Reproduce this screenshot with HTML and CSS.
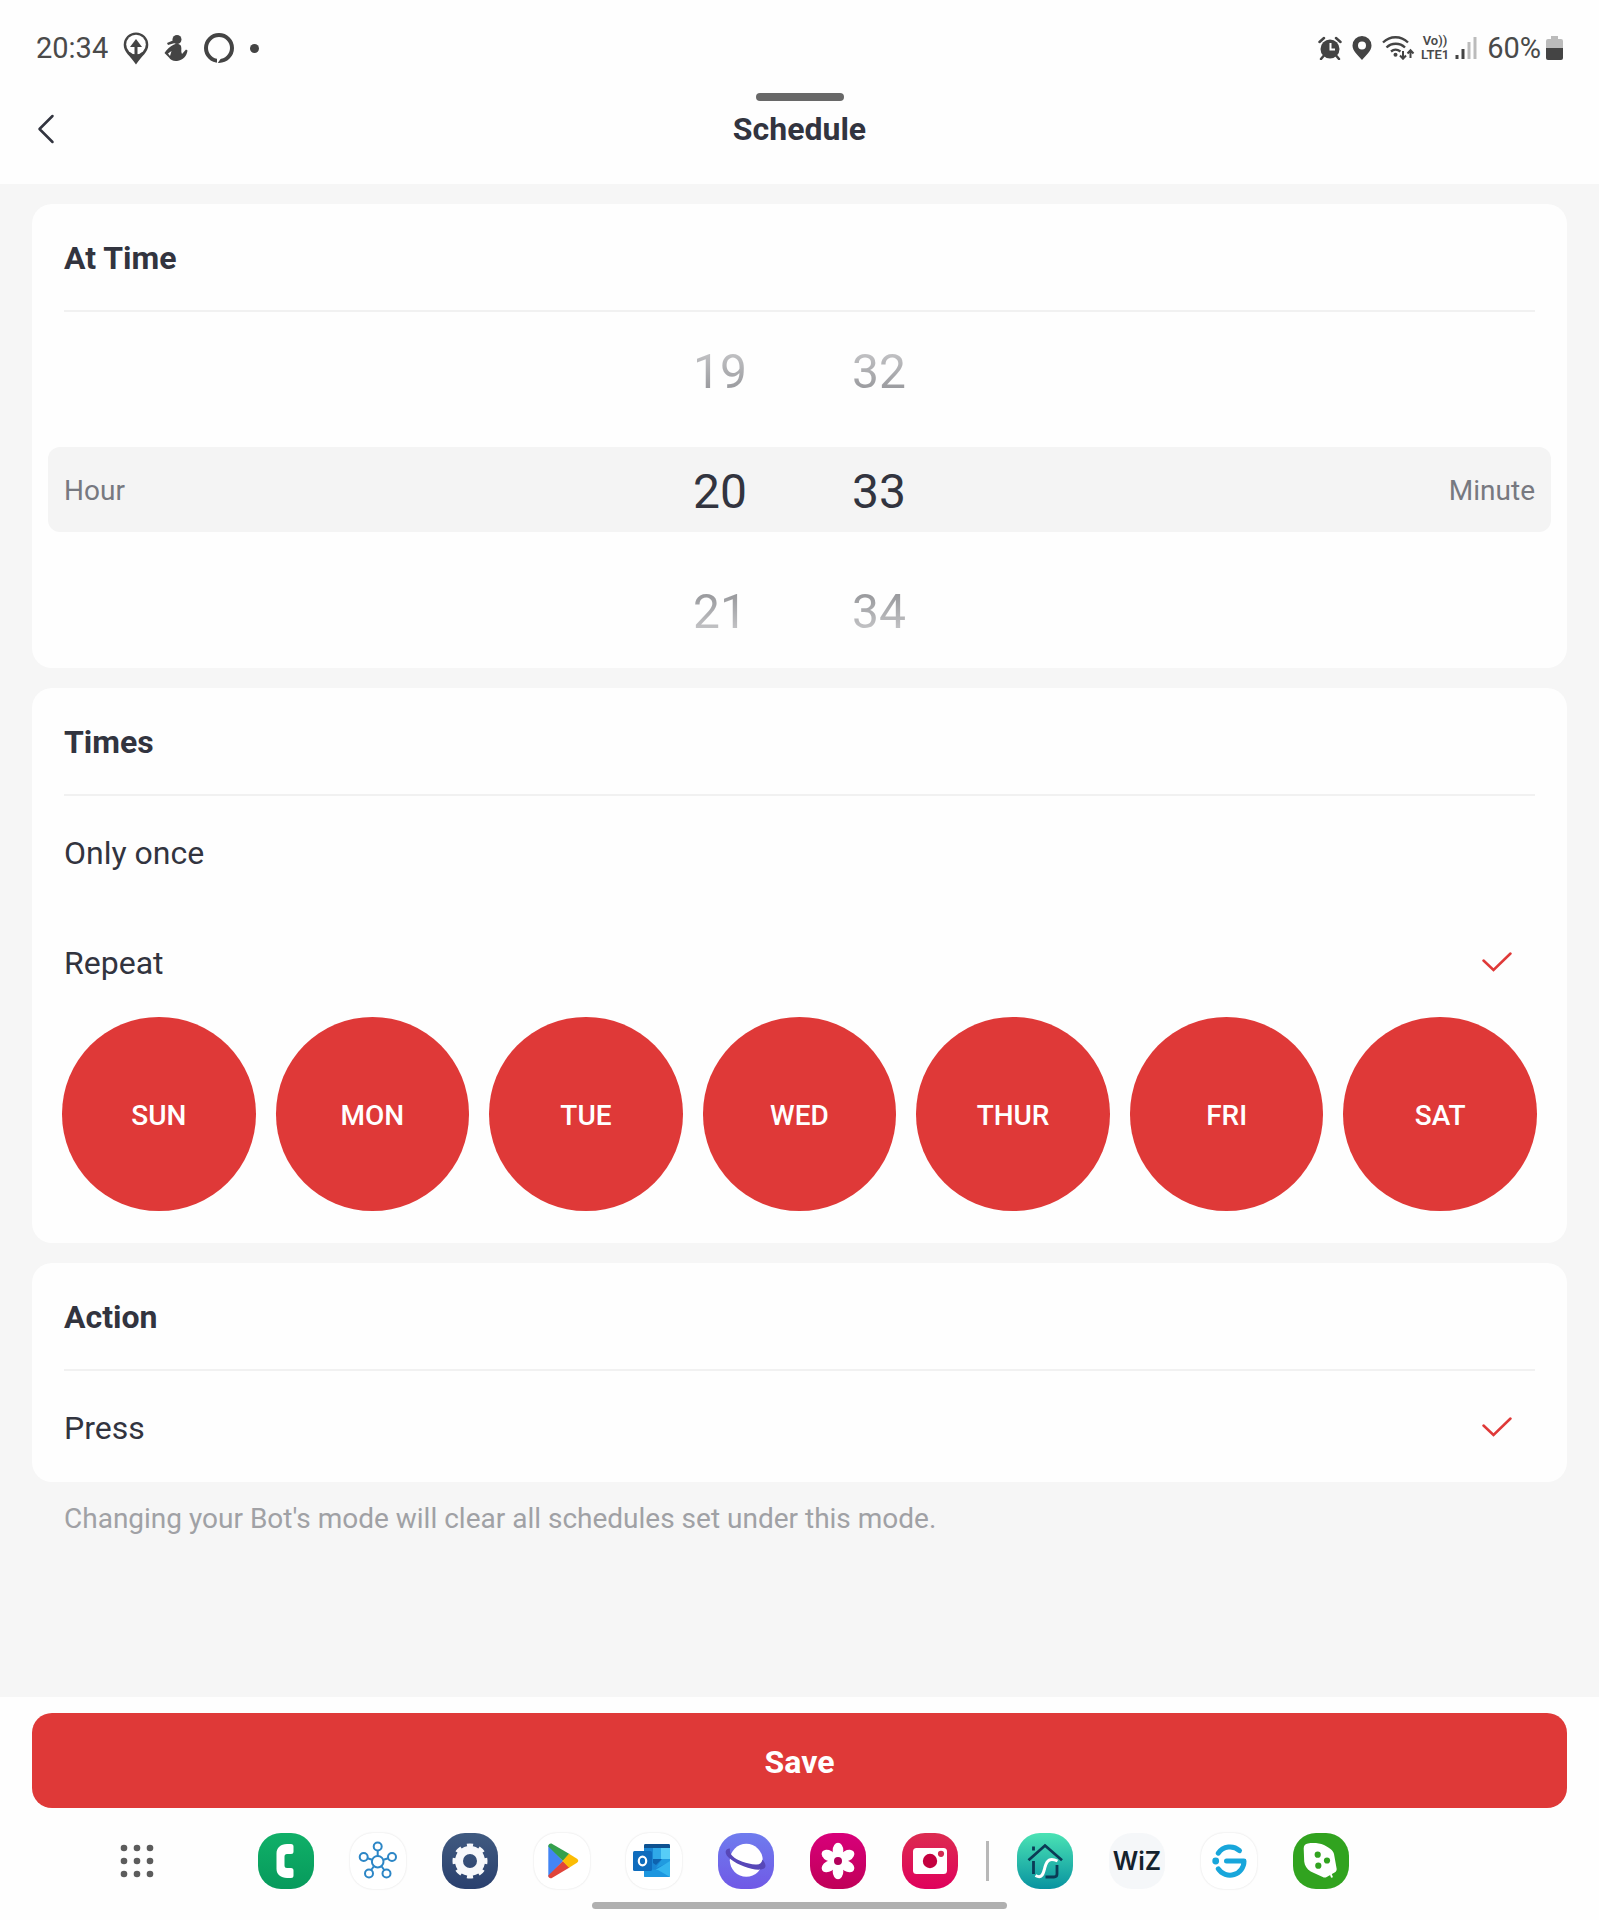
FILE: index.html
```html
<!DOCTYPE html>
<html lang="en">
<head>
	<meta charset="utf-8" />
	<title>Schedule</title>
	<meta name="viewport" content="width=device-width,initial-scale=1.0">
	<link rel="stylesheet" href="styles.css">
</head>

<body>
<div class="statusbar">
  <div class="status-left">
    <span>20:34</span>
    <svg width="26" height="33" viewBox="0 0 26 33">
      <path d="M13 .500a12.300 12.300 0 0 0-12.300 12.300c0 7.500 6.500 11 12.300 19.700 5.800-8.700 12.300-12.200 12.300-19.700A12.300 12.300 0 0 0 13 .500z" fill="#444"/>
      <circle cx="13" cy="12.500" r="9.800" fill="#fff"/>
      <path d="M13 7l6 8h-4.500v9h-3v-9H7z" fill="#444"/>
    </svg>
    <svg width="24" height="28" viewBox="0 0 24 28" fill="#444">
      <circle cx="13" cy="5.500" r="4.500"/>
      <path d="M10 6L3 9l1 2 7-2z"/>
      <path d="M10 10.500c3-1 6-.5 7 1.500 1 3-.5 5.500 1 8l4-4.500 1.500 1c-.5 5-4.500 10-10.500 10.500-4 .3-6.500-1-8-3.500L.500 19c2-3.500 6-7 9.500-8.500zM7.500 17L4 19.500 6 22z" fill-rule="evenodd"/>
    </svg>
    <svg width="32" height="32" viewBox="0 0 32 32">
      <circle cx="16" cy="16" r="13" fill="none" stroke="#444" stroke-width="4"/>
      <path d="M14 26v6l5-7z" fill="#fff"/>
    </svg>
    <span class="dot"></span>
  </div>
  <div class="status-right">
    <svg width="24" height="24" viewBox="0 0 24 24">
      <circle cx="12" cy="13" r="9.500" fill="#444"/>
      <path d="M1.500 6L6 2M22.500 6L18 2M5.500 20L3 23M18.500 20l2.500 3" stroke="#444" stroke-width="2.500" fill="none" stroke-linecap="round"/>
      <path d="M12.500 7v6.500H17" stroke="#fff" stroke-width="2" fill="none"/>
    </svg>
    <svg width="20" height="24" viewBox="0 0 20 24">
      <path d="M10 0a9.500 9.500 0 0 0-9.500 9.500C.500 15 6 19 10 24c4-5 9.500-9 9.500-14.500A9.500 9.500 0 0 0 10 0zm0 5.500a4 4 0 1 1 0 8 4 4 0 0 1 0-8z" fill="#444" fill-rule="evenodd"/>
    </svg>
    <svg width="33" height="24" viewBox="0 0 33 24" fill="none" stroke="#444" stroke-width="2.300">
      <path d="M1 6.500C8-.5 19-.5 26 6.500M4.500 11.500c5-5 13.500-5 18.500 0M9 15.500c3-2.500 6-2.500 9.500 0"/>
      <circle cx="13.500" cy="18.800" r="2" fill="#444" stroke="none"/>
      <path d="M21 15v7.500M18 19.500l3 3.200 3-3.200M28.500 22v-7.500M25.500 17.500l3-3.200 3 3.200" stroke-width="2"/>
    </svg>
    <span class="volte"><span>Vo))</span><span>LTE1</span></span>
    <svg width="22" height="24" viewBox="0 0 22 24">
      <path d="M2 19v4M8 13v10" stroke="#444" stroke-width="3"/>
      <path d="M14 6v17M20 1v22" stroke="#bbb" stroke-width="3"/>
    </svg>
    <span class="battery">60%
      <svg width="17" height="26" viewBox="0 0 17 26">
        <path d="M5 1h7v3h3q2 0 2 2v7H0V6q0-2 2-2h3z" fill="#bbb"/>
        <path d="M0 13h17v10q0 2-2 2H2q-2 0-2-2z" fill="#444"/>
      </svg>
    </span>
  </div>
</div>

<header class="header">
  <div class="handle"></div>
  <div class="titlebar">
    <a href="#" class="back" aria-label="Back">
      <svg width="18" height="30" viewBox="0 0 18 30"><path d="M15.500 2L2.500 15l13 13" fill="none" stroke="#32343f" stroke-width="2.500" stroke-linecap="round" stroke-linejoin="round"/></svg>
    </a>
    <h1>Schedule</h1>
  </div>
</header>

<main>
  <section class="card">
    <h2>At Time</h2>
    <div class="picker">
      <div class="picker-row fade-up">
        <button type="button" class="hour">19</button>
        <button type="button" class="minute">32</button>
      </div>
      <div class="picker-row current">
        <span class="unit">Hour</span>
        <output class="hour">20</output>
        <output class="minute">33</output>
        <span class="unit unit-right">Minute</span>
      </div>
      <div class="picker-row fade-down">
        <button type="button" class="hour">21</button>
        <button type="button" class="minute">34</button>
      </div>
    </div>
  </section>

  <section class="card">
    <h2>Times</h2>
    <label class="option">
      <input type="radio" name="times" value="once">
      <span>Only once</span>
      <svg class="check" width="30" height="20" viewBox="0 0 30 20"><path d="M1.500 8.500L11.500 18 28.500 1.500" stroke-width="2.500"/></svg>
    </label>
    <label class="option">
      <input type="radio" name="times" value="repeat" checked>
      <span>Repeat</span>
      <svg class="check" width="30" height="20" viewBox="0 0 30 20"><path d="M1.500 8.500L11.500 18 28.500 1.500" stroke-width="2.500"/></svg>
    </label>
    <div class="days">
      <label><input type="checkbox" checked><span>SUN</span></label>
      <label><input type="checkbox" checked><span>MON</span></label>
      <label><input type="checkbox" checked><span>TUE</span></label>
      <label><input type="checkbox" checked><span>WED</span></label>
      <label><input type="checkbox" checked><span>THUR</span></label>
      <label><input type="checkbox" checked><span>FRI</span></label>
      <label><input type="checkbox" checked><span>SAT</span></label>
    </div>
  </section>

  <section class="card">
    <h2>Action</h2>
    <label class="option">
      <input type="radio" name="action" value="press" checked>
      <span>Press</span>
      <svg class="check" width="30" height="20" viewBox="0 0 30 20"><path d="M1.500 8.500L11.500 18 28.500 1.500" stroke-width="2.500"/></svg>
    </label>
  </section>
  <p class="hint">Changing your Bot's mode will clear all schedules set under this mode.</p>
</main>

<footer>
  <button type="button" class="save">Save</button>

  <nav class="dock">
    <a href="#" class="apps" aria-label="Apps">
      <svg width="34" height="34" viewBox="0 0 34 34" fill="#5c5c5c">
        <circle cx="4" cy="4" r="3.300"/><circle cx="17" cy="4" r="3.300"/><circle cx="30" cy="4" r="3.300"/>
        <circle cx="4" cy="17" r="3.300"/><circle cx="17" cy="17" r="3.300"/><circle cx="30" cy="17" r="3.300"/>
        <circle cx="4" cy="30" r="3.300"/><circle cx="17" cy="30" r="3.300"/><circle cx="30" cy="30" r="3.300"/>
      </svg>
    </a>
    <a href="#" class="app phone" aria-label="Phone">
      <svg viewBox="0 0 56 56"><path d="M33 11h-4c-6.500 0-10.500 4-10.500 9.500V36c0 5.500 4.500 9 10.500 9h4q2.500 0 2.500-2.500v-5q0-2.500-2.500-2.500h-4q-2.500 0-2.500-2.500v-9q0-2.500 2.500-2.500h4q2.500 0 2.500-2.500v-5Q35.500 11 33 11z" fill="#fff"/></svg>
    </a>
    <a href="#" class="app light" aria-label="SmartThings">
      <svg viewBox="0 0 56 56" fill="none" stroke="#2c86c6" stroke-width="2">
        <circle cx="27.700" cy="28.700" r="5.800"/><circle cx="27.700" cy="13.500" r="4"/><circle cx="13.700" cy="24" r="4"/><circle cx="42" cy="24" r="4"/><circle cx="19" cy="40.500" r="4"/><circle cx="36.500" cy="40.500" r="4"/>
        <path d="M27.700 17.500v5.400M17.500 25.200l4.700 1.600M38.200 25.200l-4.700 1.600M21.200 37l2.500-3.500M34.200 37l-2.500-3.500"/>
      </svg>
    </a>
    <a href="#" class="app settings" aria-label="Settings">
      <svg viewBox="0 0 56 56" fill="none" stroke="#f7f8fb">
        <circle cx="28" cy="28" r="11" stroke-width="8"/>
        <circle cx="28" cy="28" r="15.500" stroke-width="4" pathLength="16" stroke-dasharray="1 1" stroke-dashoffset=".5"/>
      </svg>
    </a>
    <a href="#" class="app light" aria-label="Play Store">
      <svg viewBox="0 0 56 56">
        <path d="M14.300 12v32L29 28z" fill="#4285f4"/>
        <path d="M14.300 13.500c0-2.500 2-3.500 4-2.500L35.500 21 29 28z" fill="#34a04c"/>
        <path d="M14.300 42.500c0 2.500 2 3.500 4 2.300L35.500 34.500 29 28z" fill="#e0443a"/>
        <path d="M35 20.700l8 5q2.500 2 0 4l-8 5L28.500 28z" fill="#fbbc04"/>
      </svg>
    </a>
    <a href="#" class="app light" aria-label="Outlook">
      <svg viewBox="0 0 56 56">
        <rect x="18" y="11" width="26" height="33" rx="1.500" fill="#1a86d4"/>
        <path d="M19.500 11h23q1.500 0 1.500 1.500V15H18v-2.500q0-1.500 1.500-1.500z" fill="#0d5190"/>
        <path d="M27 15h8v11h-8z" fill="#2fa9e8"/><path d="M35 15h9v11h-9z" fill="#57cdf7"/>
        <path d="M27 26h9l-6 6-3-2z" fill="#0e62ae"/><path d="M36 26h8v3l-14 6z" fill="#209be0"/>
        <path d="M18 44l26-16v14.500q0 1.500-1.500 1.500z" fill="#34b5ee"/>
        <path d="M18 36l14 1 12 7H19.500q-1.500 0-1.500-1.500z" fill="#1d96df"/>
        <rect x="7" y="18" width="19" height="20" rx="1.500" fill="#0f6cbd"/>
        <ellipse cx="16.500" cy="28" rx="3.700" ry="4.400" fill="none" stroke="#fff" stroke-width="2.200"/>
      </svg>
    </a>
    <a href="#" class="app internet" aria-label="Internet">
      <svg viewBox="0 0 56 56">
        <circle cx="28.300" cy="27.300" r="16.500" fill="#fff"/>
        <path d="M12 15.500C6 15.500 6 22 13 26.500c8 6 21 11 30 10 6-.8 5.500-5 1.500-10-1 4-3 5.500-7 5C29 31 19 27.500 14.500 23c-2-2-3-4.500-2.500-7.500z" fill="#5747b8"/>
      </svg>
    </a>
    <a href="#" class="app gallery" aria-label="Gallery">
      <svg viewBox="0 0 56 56" fill="#fff">
        <g id="petals"><ellipse cx="28" cy="17.500" rx="5.300" ry="7.800"/><ellipse cx="28" cy="38.500" rx="5.300" ry="7.800"/></g>
        <use href="#petals" transform="rotate(60 28 28)"/><use href="#petals" transform="rotate(120 28 28)"/>
        <circle cx="28" cy="28" r="6"/>
        <circle cx="28" cy="28" r="4" fill="#b3005c"/>
      </svg>
    </a>
    <a href="#" class="app camera" aria-label="Camera">
      <svg viewBox="0 0 56 56">
        <rect x="11" y="15" width="34" height="26" rx="3.500" fill="#fff"/>
        <circle cx="28" cy="28" r="7.200" fill="#c4003f"/><circle cx="39" cy="20.800" r="3.100" fill="#d32a50"/>
      </svg>
    </a>
    <span class="separator"></span>
    <a href="#" class="app home" aria-label="Smart home">
      <svg viewBox="0 0 56 56" fill="none" stroke="#0b3b55" stroke-width="2.800">
        <path d="M11.500 27.300L28 12.500l17 14.800M16.500 13.500v4M16.500 28v13M40 32v9q0 3-3 3h-8.500"/>
        <path d="M18.500 42.500c7 4 8-3 9.500-8.500 2-7 5-9.500 12.500-6" stroke="#fff" stroke-width="3"/>
      </svg>
    </a>
    <a href="#" class="app wiz">WiZ</a>
    <a href="#" class="app light" aria-label="Govee">
      <svg viewBox="0 0 56 56" fill="none" stroke="#18a6db" stroke-width="5">
        <path d="M17.300 20.200a14 14 0 0 1 21.200-2.500" stroke-linecap="round"/>
        <path d="M25.500 28H43a14 14 0 0 1-25.700 7.800" stroke-linecap="round" stroke-linejoin="round"/>
        <circle cx="14.700" cy="28" r="3.400" fill="#18a6db" stroke="none"/>
      </svg>
    </a>
    <a href="#" class="app plant" aria-label="Nature">
      <svg viewBox="0 0 56 56">
        <path d="M15 10.500c5-1 11-.5 16 1.500 5 2.500 9 5 10 9l2.700 15c0 2-1 3-3 4l-7 4q-2 1-4 0l-12-5.500c-4-2.500-6-6-6.500-10l-.5-13c0-3 1.500-4.500 4.300-5z" fill="#fff"/>
        <path d="M37 39l2 5.500" stroke="#fff" stroke-width="2"/>
        <g fill="#31a31f"><circle cx="24.700" cy="21.700" r="3.100"/><circle cx="34" cy="27.500" r="3.100"/><circle cx="25.300" cy="32.700" r="3.100"/></g>
      </svg>
    </a>
  </nav>
  <div class="homebar"></div>
</footer>
</body>
</html>
```
FILE: styles.css
```css
* {
  box-sizing: border-box;
}

body {
  margin: 0;
  min-height: 100vh;
  display: flex;
  flex-direction: column;
  background: #fefefe;
  color: #32343f;
  font-family: Roboto, "Liberation Sans", sans-serif;
  font-size: 32px;
}

svg {
  display: block;
}

button {
  border: none;
  background: none;
  padding: 0;
  font: inherit;
  color: inherit;
  cursor: pointer;
}

a {
  text-decoration: none;
}

/* Status bar */
.statusbar {
  height: 93px;
  padding: 3px 36px 0;
  display: flex;
  align-items: center;
  justify-content: space-between;
  font-size: 29px;
  color: #4a4a4a;
}

.status-left {
  display: flex;
  align-items: center;
  gap: 15px;
}

.dot {
  width: 9px;
  height: 9px;
  border-radius: 50%;
  background: #444;
}

.status-right {
  display: flex;
  align-items: center;
  gap: 10px;
}

.volte {
  display: grid;
  margin: 0 -4px;
  font-size: 13px;
  font-weight: 600;
  line-height: 14px;
  text-align: center;
}

.battery {
  display: flex;
  align-items: center;
  gap: 5px;
}

/* Header */
.handle {
  width: 88px;
  height: 8px;
  margin: 0 auto;
  border-radius: 4px;
  background: #686868;
}

.titlebar {
  display: grid;
  grid-template-columns: 1fr auto 1fr;
  align-items: center;
  height: 83px;
  padding: 0 37px 27px;
}

h1 {
  margin: 0;
  font-size: 32px;
  font-weight: 700;
}

/* Cards */
main {
  flex: 1;
  padding: 20px 32px;
  background: #f6f6f6;
}

.card {
  margin-bottom: 20px;
  border-radius: 20px;
  background: #fefefe;
}

h2 {
  margin: 0 32px 1px;
  padding-top: 3px;
  border-bottom: 2px solid #f1f1f1;
  font-size: 32px;
  font-weight: 700;
  line-height: 103px;
}

.picker {
  display: grid;
  grid-template-rows: 114px 85px 116px;
  gap: 20px;
  padding: 0 16px;
}

.picker-row {
  display: grid;
  grid-template-columns: 1fr 159px 159px 1fr;
  align-items: center;
  padding: 0 16px;
}

.hour,
.minute {
  padding-top: 4px;
  font-size: 48px;
  line-height: 56px;
  text-align: center;
}

.hour {
  grid-column: 2;
}

.minute {
  grid-column: 3;
}

.current {
  border-radius: 12px;
  background: #f4f4f4;
}

.unit {
  padding-top: 2px;
  font-size: 28px;
  color: #777980;
}

.unit-right {
  text-align: right;
}

.fade-up button,
.fade-down button {
  -webkit-background-clip: text;
  background-clip: text;
  color: transparent;
}

.fade-up button {
  background-image: linear-gradient(#cfcfd1, #8e8f93);
}

.fade-down button {
  background-image: linear-gradient(#88898d, #cfcfd1);
}

.option {
  position: relative;
  display: flex;
  align-items: center;
  justify-content: space-between;
  height: 110px;
  padding: 0 55px 0 32px;
  cursor: pointer;
}

.option span {
  padding-top: 2px;
}

.option input,
.days input {
  position: absolute;
  opacity: 0;
}

.check {
  visibility: hidden;
  fill: none;
  stroke: #df3938;
  stroke-linecap: round;
}

input:checked ~ .check {
  visibility: visible;
}

.days {
  display: grid;
  grid-template-columns: repeat(7, 1fr);
  gap: 20px;
  padding: 0 30px 32px;
}

.days label {
  position: relative;
}

.days span {
  display: flex;
  align-items: center;
  justify-content: center;
  aspect-ratio: 1;
  padding-top: 3px;
  border-radius: 50%;
  background: #f4f4f4;
  font-size: 28px;
  font-weight: 500;
}

.days input:checked + span {
  background: #df3938;
  color: #fff;
}

.hint {
  margin: 0 32px;
  padding-top: 1px;
  font-size: 28px;
  line-height: 32px;
  color: #a0a1a5;
}

/* Bottom */
footer {
  padding: 16px 32px 11px;
}

.save {
  display: block;
  width: 100%;
  height: 95px;
  padding-top: 3px;
  border-radius: 20px;
  background: #df3938;
  color: #fff;
  font-weight: 700;
}

.dock {
  display: flex;
  align-items: center;
  gap: 36px;
  margin-top: 25px;
  padding-left: 88px;
}

.apps {
  margin-right: 68px;
}

.app {
  width: 56px;
  height: 56px;
  border-radius: 23px;
}

.light {
  background: #fff;
  box-shadow: 0 0 2px #ddd;
}

.phone {
  background: linear-gradient(#10b068, #079a5c);
}

.settings {
  background: linear-gradient(#405a80, #2a406e);
}

.internet {
  background: linear-gradient(#6f7cee, #7059e6);
}

.gallery {
  background: linear-gradient(#d8007a, #c00058);
}

.camera {
  background: linear-gradient(#dc2c50, #e0005c);
}

.home {
  background: linear-gradient(#4be3b4, #0893a0);
}

.wiz {
  background: #f5f7f9;
  color: #14222d;
  font-family: Inter, sans-serif;
  font-size: 25px;
  font-weight: 600;
  line-height: 56px;
  text-align: center;
}

.plant {
  background: #31a31f;
}

.separator {
  width: 3px;
  height: 40px;
  margin: 0 -8px;
  background: #b8b8b8;
}

.homebar {
  width: 27%;
  height: 7px;
  margin: 13px auto 0;
  border-radius: 4px;
  background: #b0b0b0;
}
```
